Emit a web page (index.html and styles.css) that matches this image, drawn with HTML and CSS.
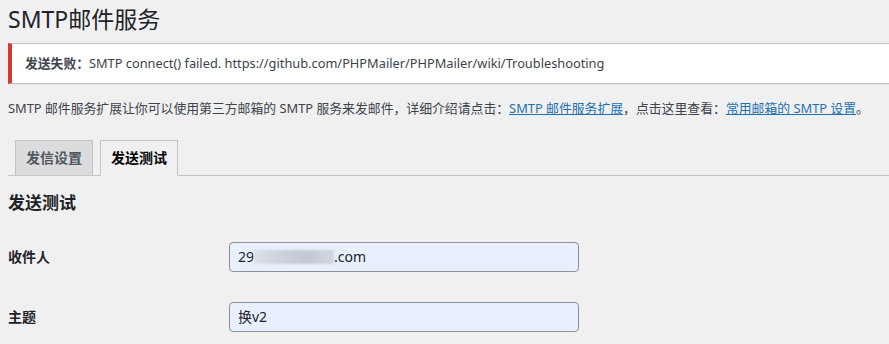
FILE: index.html
```html
<!DOCTYPE html>
<html lang="zh-CN">
<head>
    <meta charset="UTF-8">
    <title>SMTP邮件服务</title>
    <link rel="stylesheet" href="styles.css">
</head>
<body>
    <div class="wrap">
        <h1>SMTP邮件服务</h1>

        <div class="notice notice-error">
            <p><strong>发送失败：</strong>SMTP connect() failed. https://github.com/PHPMailer/PHPMailer/wiki/Troubleshooting</p>
        </div>

        <p class="intro">SMTP 邮件服务扩展让你可以使用第三方邮箱的 SMTP 服务来发邮件，详细介绍请点击：<a href="#">SMTP 邮件服务扩展</a>，点击这里查看：<a href="#">常用邮箱的 SMTP 设置</a>。</p>

        <nav class="nav-tab-wrapper">
            <a href="#" class="nav-tab">发信设置</a>
            <a href="#" class="nav-tab nav-tab-active">发送测试</a>
        </nav>

        <h2>发送测试</h2>

        <table class="form-table">
            <tr>
                <th><label for="to">收件人</label></th>
                <td>
                    <div class="regular-text" id="to">29<span class="blurred"></span>.com</div>
                </td>
            </tr>
            <tr>
                <th><label for="subject">主题</label></th>
                <td>
                    <div class="regular-text" id="subject">换v2</div>
                </td>
            </tr>
        </table>
    </div>
</body>
</html>
```

FILE: styles.css
```css
* { box-sizing: border-box; }
body {
    margin: 0;
    background: #f0f0f1;
    color: #3c434a;
    font-family: "Noto Sans", "Noto Sans CJK SC", sans-serif;
    font-size: 13px;
    line-height: 1.4;
    overflow: hidden;
}
.wrap {
    padding-left: 8px;
}
h1 {
    font-size: 23px;
    font-weight: 400;
    color: #1d2327;
    margin: 0;
    padding: 5px 0 4px;
    line-height: 1.3;
}
.notice {
    background: #fff;
    border: 1px solid #c3c4c7;
    border-left: 4px solid #d63638;
    border-right: 0;
    box-shadow: 0 1px 1px rgba(0,0,0,0.04);
    margin: 4px 0 15px;
    padding: 1px 12px 1px 13px;
}
.notice p {
    margin: 7px 0;
    padding: 2px 0;
    font-size: 12.8px;
    line-height: 19px;
}
.notice strong { font-weight: 600; }
.intro {
    margin: 13px 0;
    line-height: 1.5;
    font-size: 12.85px;
}
.intro a { color: #2271b1; }
.nav-tab-wrapper {
    border-bottom: 1px solid #c3c4c7;
    padding-top: 9px;
    display: flex;
}
.nav-tab {
    margin-left: 7px;
    margin-bottom: -1px;
    padding: 5px 10px;
    font-size: 14px;
    line-height: 24px;
    font-weight: 600;
    color: #50575e;
    background: #dcdcde;
    border: 1px solid #c3c4c7;
    text-decoration: none;
}
.nav-tab-active {
    background: #f0f0f1;
    border-bottom-color: #f0f0f1;
    color: #000;
}
h2 {
    font-size: 17px;
    font-weight: 600;
    color: #1d2327;
    margin: 16px 0 0;
    line-height: 1.3;
}
.form-table {
    border-collapse: collapse;
    margin-top: 13px;
}
.form-table th {
    width: 210px;
    padding: 20px 10px 20px 0;
    text-align: left;
    vertical-align: middle;
    font-size: 14px;
    font-weight: 600;
    color: #1d2327;
    line-height: 1.3;
}
.form-table td {
    padding: 15px 10px 15px 11px;
}
.regular-text {
    width: 350px;
    height: 30px;
    padding: 0 8px;
    font-size: 14px;
    line-height: 28px;
    color: #1d2327;
    background: #e8f0fe;
    border: 1px solid #8c8f94;
    border-radius: 4px;
}
.blurred {
    display: inline-block;
    width: 80px;
    height: 14px;
    vertical-align: -2px;
    background: linear-gradient(90deg, #dde2ea 0%, #ccd1da 35%, #c3c8d2 65%, #d2d7e0 100%);
    filter: blur(1px);
}
```
